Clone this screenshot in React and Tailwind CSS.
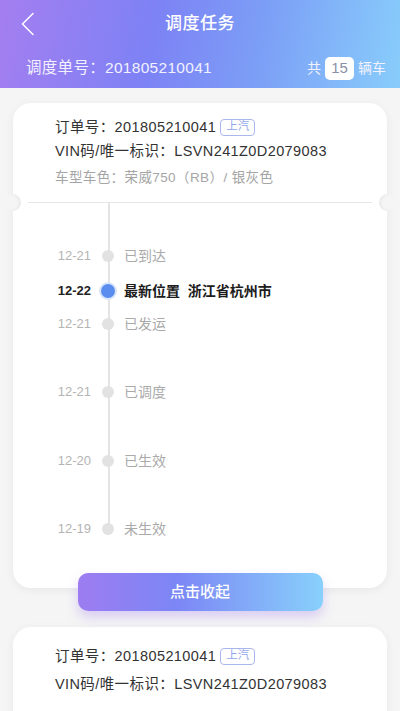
const font = { fontFamily: '"Liberation Sans", "Noto Sans CJK SC", "Noto Sans", sans-serif' }

const steps = [
  { date: '12-21', label: '已到达', gap: 'mt-0' },
  { date: '12-22', label: '最新位置  浙江省杭州市', active: true, gap: 'mt-[15px]' },
  { date: '12-21', label: '已发运', gap: 'mt-[13px]' },
  { date: '12-21', label: '已调度', gap: 'mt-[48px]' },
  { date: '12-20', label: '已生效', gap: 'mt-[49px]' },
  { date: '12-19', label: '未生效', gap: 'mt-[48px]' },
]

function OrderInfo({ top, lead }) {
  return (
    <div className={`pl-[42px] ${top} ${lead} text-[14.5px] tracking-[0.4px] text-[#333]`}>
      <div className="flex items-center">
        <span>订单号：201805210041</span>
        <span className="ml-[4px] h-[17px] px-[5px] flex items-center rounded-[4px] border border-[#aab7ee] text-[11.5px] leading-none tracking-normal text-[#93a5ea]">上汽</span>
      </div>
      <div>VIN码/唯一标识：LSVN241Z0D2079083</div>
    </div>
  )
}

function Timeline() {
  return (
    <div className="relative pt-[43px]">
      <div className="absolute left-[95px] top-0 bottom-[4px] w-[2px] bg-[#e4e4e4]" />
      {steps.map((s, i) => (
        <div key={i} className={`relative flex items-center h-[20px] ${s.gap}`}>
          <div className={`w-[78px] text-right text-[13px] ${s.active ? 'font-bold text-[#222]' : 'text-[#b4b4b4]'}`}>{s.date}</div>
          <div className="w-[33px] flex justify-center">
            {s.active ? (
              <div className="w-[14px] h-[14px] rounded-full bg-[#5b8def] ring-2 ring-[#dbe6fb]" />
            ) : (
              <div className="w-[12px] h-[12px] rounded-full bg-[#e2e2e2]" />
            )}
          </div>
          <div className={`whitespace-pre text-[14px] ${s.active ? 'font-bold text-[#1c1c1c]' : 'text-[#aaa]'}`}>{s.label}</div>
        </div>
      ))}
    </div>
  )
}

export default function App() {
  return (
    <div style={font} className="w-[400px] h-[711px] overflow-hidden bg-[#f5f5f5]">
      <header className="h-[88px] bg-[linear-gradient(100deg,#a47ef0_0%,#7d82f5_38%,#7c9ff6_65%,#88cdfb_100%)] text-white">
        <div className="relative h-[48px] flex items-center justify-center">
          <svg className="absolute left-[20px] top-[12px]" width="16" height="24" viewBox="0 0 16 24" fill="none">
            <polyline points="13,1.5 2.5,12 13,22.5" stroke="white" strokeWidth="1.5" strokeLinecap="round" strokeLinejoin="round" />
          </svg>
          <span className="text-[17px] font-medium tracking-[0.5px]">调度任务</span>
        </div>
        <div className="flex items-center justify-between pl-[26px] pr-[14px] h-[40px] text-[15.5px] text-[#f1f1ff]">
          <span className="tracking-[0.3px]">调度单号：201805210041</span>
          <div className="flex items-center text-[14px]">
            <span>共</span>
            <span className="mx-[4px] w-[29px] h-[23px] rounded-[5px] bg-white text-[#8a8fa6] text-[15px] flex items-center justify-center">15</span>
            <span>辆车</span>
          </div>
        </div>
      </header>

      <div className="relative mx-[13px] mt-[15px] bg-white rounded-[18px] shadow-[0_2px_10px_rgba(0,0,0,0.06)] pb-[49px]">
        <OrderInfo top="pt-[12px]" lead="leading-[24px]" />
        <div className="pl-[42px] mt-[3px] text-[13.5px] leading-[24px] tracking-[0.4px] text-[#a5a5a5]">车型车色：荣威750（RB）/ 银灰色</div>
        <div className="relative mt-[12px] mx-[15px] h-[1px] bg-[#e6e6e6]">
          <div className="absolute -left-[24px] -top-[8px] w-[17px] h-[17px] rounded-full bg-[#f5f5f5] shadow-[inset_-2px_0_3px_rgba(0,0,0,0.05)]" />
          <div className="absolute -right-[24px] -top-[8px] w-[17px] h-[17px] rounded-full bg-[#f5f5f5] shadow-[inset_2px_0_3px_rgba(0,0,0,0.05)]" />
        </div>
        <Timeline />
      </div>

      <div className="relative z-10 -mt-[15px] flex justify-center">
        <button className="w-[245px] h-[38px] rounded-[10px] bg-[linear-gradient(90deg,#9d7cf1_0%,#7c86f5_40%,#88d0fb_100%)] text-white text-[15px] font-medium shadow-[0_6px_12px_rgba(150,110,240,0.3)]">
          点击收起
        </button>
      </div>

      <div className="mx-[13px] mt-[16px] bg-white rounded-[18px] shadow-[0_2px_10px_rgba(0,0,0,0.06)] h-[120px]">
        <OrderInfo top="pt-[15px]" lead="leading-[28px]" />
      </div>
    </div>
  )
}
